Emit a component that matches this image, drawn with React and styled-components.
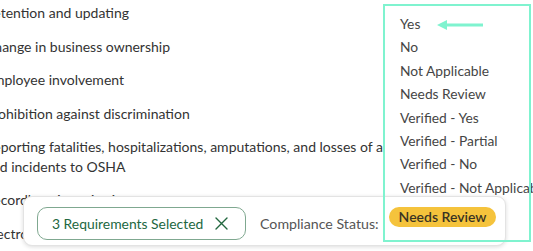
import styled, { createGlobalStyle } from "styled-components";

const requirements = [
  ["Retention and updating"],
  ["Change in business ownership"],
  ["Employee involvement"],
  ["Prohibition against discrimination"],
  [
    "Reporting fatalities, hospitalizations, amputations, and losses of an eye,",
    "and incidents to OSHA",
  ],
  ["Recordkeeping criteria"],
  ["Electronic submission of records"],
  ["Submission requirements"],
];

const statusOptions = [
  "Yes",
  "No",
  "Not Applicable",
  "Needs Review",
  "Verified - Yes",
  "Verified - Partial",
  "Verified - No",
  "Verified - Not Applicable",
];

export default function App() {
  return (
    <>
      <GlobalStyle />
      <Page>
        <RequirementList>
          {requirements.map((lines) => (
            <Requirement key={lines[0]}>
              {lines.map((line) => (
                <Line key={line}>{line}</Line>
              ))}
            </Requirement>
          ))}
        </RequirementList>

        <StatusMenu>
          {statusOptions.map((option) => (
            <MenuOption key={option}>{option}</MenuOption>
          ))}
        </StatusMenu>

        <SelectionBar>
          <SelectionChip>
            3 Requirements Selected
            <ClearButton aria-label="Clear selection">
              <svg width="13" height="13" viewBox="0 0 13 13">
                <path
                  d="M1 1 L12 12 M12 1 L1 12"
                  stroke="currentColor"
                  strokeWidth="1.4"
                  strokeLinecap="round"
                />
              </svg>
            </ClearButton>
          </SelectionChip>
          <StatusLabel>Compliance Status:</StatusLabel>
          <StatusBadge>Needs Review</StatusBadge>
        </SelectionBar>

        <Highlight />
        <Pointer width="50" height="12" viewBox="0 0 50 12">
          <path d="M9 6 H47" stroke="#7ff3cf" strokeWidth="3" />
          <path d="M1 6 L11 1 L11 11 Z" fill="#7ff3cf" />
        </Pointer>
      </Page>
    </>
  );
}

const GlobalStyle = createGlobalStyle`
  body {
    margin: 0;
    background: #ffffff;
    font-family: Lato, "Liberation Sans", sans-serif;
    overflow: hidden;
  }
`;

const Page = styled.div`
  position: relative;
  width: 533px;
  height: 251px;
  overflow: hidden;
  background: #ffffff;
`;

const RequirementList = styled.ul`
  list-style: none;
  margin: 0 0 0 -15px;
  padding: 3px 0 0;
  display: flex;
  flex-direction: column;
  gap: 14px;
  font-size: 14px;
  line-height: 19.5px;
  color: #333333;
  white-space: nowrap;
`;

const Requirement = styled.li`
  display: flex;
  flex-direction: column;
`;

const Line = styled.span``;

const StatusMenu = styled.ul`
  position: absolute;
  left: 385px;
  top: 6px;
  width: 160px;
  height: 190px;
  margin: 0;
  padding: 6px 0 0 15px;
  list-style: none;
  background: #ffffff;
  font-size: 13.8px;
  line-height: 23.4px;
  color: #454545;
  white-space: nowrap;
`;

const MenuOption = styled.li``;

const SelectionBar = styled.div`
  position: absolute;
  left: 23px;
  top: 196px;
  width: 483px;
  height: 50px;
  box-sizing: border-box;
  display: flex;
  align-items: center;
  gap: 14px;
  padding: 0 13px;
  background: #ffffff;
  border: 1px solid #e3e3e3;
  border-radius: 9px;
  box-shadow: 0 1px 4px rgba(0, 0, 0, 0.14);
  white-space: nowrap;
`;

const SelectionChip = styled.div`
  flex-shrink: 0;
  display: flex;
  align-items: center;
  justify-content: space-between;
  width: 209px;
  height: 33px;
  margin-top: 4px;
  padding: 0 17px 0 14px;
  box-sizing: border-box;
  border: 1px solid #7fa890;
  border-radius: 10px;
  color: #22673f;
  font-size: 13.9px;
`;

const ClearButton = styled.span`
  display: flex;
  color: #22673f;
`;

const StatusLabel = styled.span`
  flex-shrink: 0;
  margin-top: 4px;
  font-size: 14.2px;
  color: #555555;
`;

const StatusBadge = styled.span`
  flex-shrink: 0;
  align-self: flex-start;
  margin-top: 10px;
  margin-left: -4px;
  padding: 0 10px;
  height: 20px;
  line-height: 20px;
  border-radius: 10px;
  background: #f5c33c;
  color: #3a3423;
  font-size: 14px;
  font-weight: 600;
`;

const Highlight = styled.div`
  position: absolute;
  left: 383px;
  top: 4px;
  width: 148px;
  height: 238px;
  box-sizing: border-box;
  border: 2px solid #7ff3cf;
  pointer-events: none;
`;

const Pointer = styled.svg`
  position: absolute;
  left: 436px;
  top: 19px;
`;
